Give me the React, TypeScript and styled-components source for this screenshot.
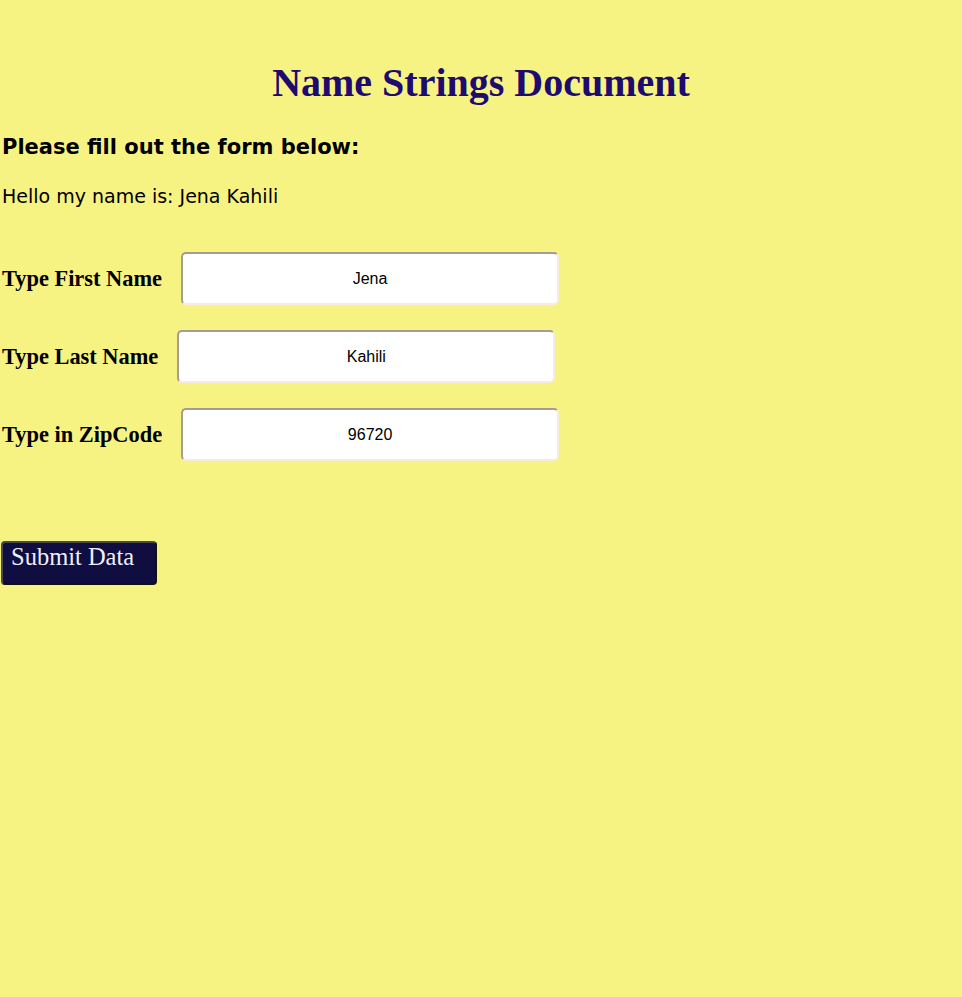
import React, { useState } from 'react';
import styled, { createGlobalStyle } from 'styled-components';

const GlobalStyle = createGlobalStyle`
  html, body {
    margin: 0;
    padding: 0;
    background: #f7f383;
    min-height: 100%;
  }
  body {
    font-family: "DejaVu Sans", Verdana, sans-serif;
  }
`;

const Page = styled.div`
  padding: 0 2px;
  min-height: 997px;
`;

const Title = styled.h1`
  font-family: "Liberation Serif", "Times New Roman", serif;
  font-size: 40px;
  font-weight: bold;
  color: #1e0b70;
  text-align: center;
  margin: 0;
  padding-top: 60px;
  line-height: 46px;
`;

const Prompt = styled.h3`
  font-size: 21px;
  font-weight: bold;
  color: #000;
  margin: 28px 0 0;
  line-height: 26px;
`;

const Greeting = styled.p`
  font-size: 19px;
  margin: 23px 0 0;
  line-height: 26px;
`;

const Form = styled.form`
  margin-top: 43px;
  display: flex;
  flex-direction: column;
  gap: 25px;
`;

const Row = styled.div`
  display: flex;
  align-items: center;
`;

const Label = styled.label`
  font-family: "Liberation Serif", "Times New Roman", serif;
  font-size: 22.4px;
  font-weight: bold;
  color: #000;
  margin-right: 19px;
`;

const Field = styled.input`
  width: 378px;
  height: 53px;
  box-sizing: border-box;
  border-radius: 5px;
  border: 2px solid;
  border-color: #a59d90 #f6ebe0 #f6ebe0 #a59d90;
  background: #fff;
  font-family: "Liberation Sans", Arial, sans-serif;
  font-size: 16px;
  color: #000;
  text-align: center;
  outline: none;
`;

const Submit = styled.button`
  margin-top: 55px;
  width: 156px;
  height: 44px;
  box-sizing: border-box;
  background: #100d40;
  color: #eef0ff;
  border: 2px solid #4a4a4a;
  border-bottom-color: #111;
  border-right-color: #111;
  border-radius: 4px;
  font-family: "Liberation Serif", "Times New Roman", serif;
  font-size: 24.5px;
  text-align: left;
  padding: 1px 8px 14px;
  margin-left: -1px;
  cursor: pointer;
  align-self: flex-start;
  line-height: 26px;
`;

const App = () => {
  const [first, setFirst] = useState('Jena');
  const [last, setLast] = useState('Kahili');
  const [zip, setZip] = useState('96720');

  return (
    <Page>
      <GlobalStyle />
      <Title>Name Strings Document</Title>
      <Prompt>Please fill out the form below:</Prompt>
      <Greeting>Hello my name is: {first} {last}</Greeting>
      <Form onSubmit={(e) => e.preventDefault()}>
        <Row>
          <Label>Type First Name</Label>
          <Field value={first} onChange={(e) => setFirst(e.target.value)} />
        </Row>
        <Row>
          <Label>Type Last Name</Label>
          <Field value={last} onChange={(e) => setLast(e.target.value)} />
        </Row>
        <Row>
          <Label>Type in ZipCode</Label>
          <Field value={zip} onChange={(e) => setZip(e.target.value)} />
        </Row>
        <Submit type="submit">Submit Data</Submit>
      </Form>
    </Page>
  );
};

export default App;
